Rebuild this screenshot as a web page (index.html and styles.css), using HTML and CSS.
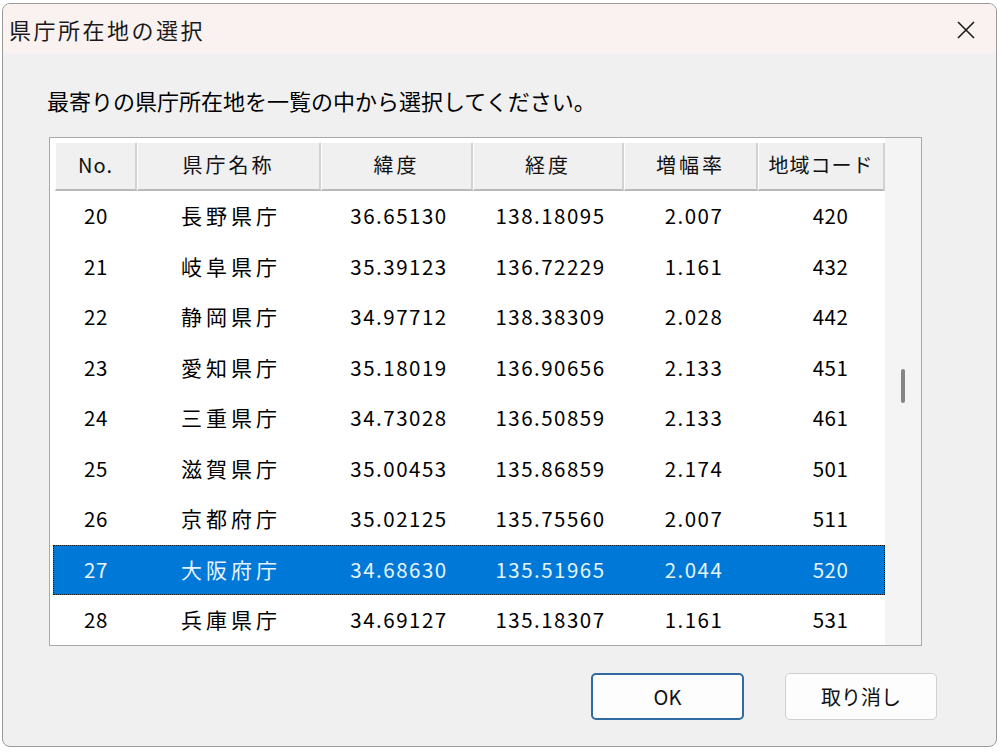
FILE: index.html
```html
<!DOCTYPE html>
<html lang="ja">
<head>
  <meta charset="UTF-8">
  <title>県庁所在地の選択</title>
  <link rel="stylesheet" href="styles.css">
</head>
<body>

  <div class="dialog">
    <div class="title-bar">
      <span class="title">県庁所在地の選択</span>
      <button class="close-btn" aria-label="閉じる">
        <svg width="20" height="20" viewBox="0 0 20 20">
          <path d="M2 2 L18 18 M18 2 L2 18" stroke="#1a1a1a" stroke-width="1.6" fill="none"/>
        </svg>
      </button>
    </div>

    <div class="dialog-body">
      <p class="prompt">最寄りの県庁所在地を一覧の中から選択してください。</p>

      <div class="list-box">
        <div class="list-main">
          <div class="list-header">
            <div class="hcell col-no">No.</div>
            <div class="hcell col-name">県庁名称</div>
            <div class="hcell col-lat">緯度</div>
            <div class="hcell col-lon">経度</div>
            <div class="hcell col-amp">増幅率</div>
            <div class="hcell col-code">地域コード</div>
          </div>
          <div class="list-rows" id="rows">
            <!-- rows are filled in by the script below -->
          </div>
        </div>
        <div class="scrollbar">
          <div class="thumb"></div>
        </div>
      </div>

      <div class="buttons">
        <button class="btn btn-default">OK</button>
        <button class="btn">取り消し</button>
      </div>
    </div>
  </div>

  <script>
    const prefs = [
      [20, '長野県庁', '36.65130', '138.18095', '2.007', 420],
      [21, '岐阜県庁', '35.39123', '136.72229', '1.161', 432],
      [22, '静岡県庁', '34.97712', '138.38309', '2.028', 442],
      [23, '愛知県庁', '35.18019', '136.90656', '2.133', 451],
      [24, '三重県庁', '34.73028', '136.50859', '2.133', 461],
      [25, '滋賀県庁', '35.00453', '135.86859', '2.174', 501],
      [26, '京都府庁', '35.02125', '135.75560', '2.007', 511],
      [27, '大阪府庁', '34.68630', '135.51965', '2.044', 520],
      [28, '兵庫県庁', '34.69127', '135.18307', '1.161', 531]
    ];
    const selected = 27;
    const cols = ['col-no', 'col-name', 'col-lat', 'col-lon', 'col-amp', 'col-code'];
    const body = document.getElementById('rows');

    prefs.forEach(function(p) {
      const row = document.createElement('div');
      row.className = 'row' + (p[0] === selected ? ' selected' : '');
      p.forEach(function(val, i) {
        const cell = document.createElement('div');
        cell.className = 'cell ' + cols[i];
        cell.textContent = val;
        row.appendChild(cell);
      });
      body.appendChild(row);
    });
  </script>

</body>
</html>
```

FILE: styles.css
```css
body {
  margin: 0;
  padding: 3px 3px 3px 2px;
  background-color: #ffffff;
  font-family: "Noto Sans CJK JP", "Noto Sans", sans-serif;
  color: #000;
}
.dialog {
  height: 744px;
  box-sizing: border-box;
  border: 1px solid #9a9a9a;
  border-radius: 8px;
  overflow: hidden;
  background-color: #f0f0f0;
  display: flex;
  flex-direction: column;
}
.title-bar {
  height: 49px;
  flex: none;
  background-color: #f9f2f0;
  display: flex;
  align-items: center;
  justify-content: space-between;
  padding: 0 20px 0 6px;
}
.title {
  font-size: 22px;
  letter-spacing: 2.5px;
  color: #1a1a1a;
}
.close-btn {
  background: none;
  border: none;
  padding: 0;
  width: 20px;
  height: 20px;
  margin-top: 2px;
}
.dialog-body {
  padding: 0 0 0 46px;
}
.prompt {
  margin: 35px 0 25px -2px;
  font-size: 22px;
  line-height: 24px;
}

/* list view */
.list-box {
  width: 873px;
  height: 509px;
  box-sizing: border-box;
  border: 1px solid #a9a9a9;
  background-color: #fff;
  display: flex;
  overflow: hidden;
}
.list-main {
  width: 832px;
  padding: 5px 0 0 3px;
}
.list-header {
  display: flex;
  height: 48px;
  padding-left: 2px;
}
.hcell {
  box-sizing: border-box;
  height: 48px;
  padding-bottom: 3px;
  background-color: #f0f0f0;
  border-left: 1px solid #ffffff;
  border-right: 2px solid #d2d2d2;
  border-bottom: 2px solid #b9b9b9;
  display: flex;
  align-items: center;
  justify-content: center;
  font-size: 20px;
  letter-spacing: 3px;
  color: #111;
}
.list-header .col-no { width: 82px; letter-spacing: 1px; }
.list-header .col-name { width: 184px; }
.list-header .col-lat { width: 152px; }
.list-header .col-lon { width: 151px; }
.list-header .col-amp { width: 134px; }
.list-header .col-code { width: 127px; letter-spacing: 1px; }

.row {
  display: flex;
  height: 50.5px;
  box-sizing: border-box;
  font-size: 20.5px;
  letter-spacing: 1.5px;
}
.cell {
  display: flex;
  align-items: center;
  justify-content: center;
  box-sizing: border-box;
  padding-bottom: 2px;
}
.row .col-no { width: 86px; letter-spacing: 0.5px; }
.row .col-name { width: 184px; letter-spacing: 4px; font-size: 21px; }
.row .col-lat { width: 152px; }
.row .col-lon { width: 151px; }
.row .col-amp { width: 134px; padding-left: 2px; }
.row .col-code { width: 125px; padding-left: 16px; letter-spacing: 0.5px; }

.row.selected {
  background-color: #0078d7;
  color: #e6f4ff;
  outline: 1px dotted #1a1a1a;
  outline-offset: -1px;
}

/* scroll bar */
.scrollbar {
  flex: 1;
  background-color: #f4f4f4;
  position: relative;
}
.thumb {
  position: absolute;
  left: 16px;
  top: 231px;
  width: 4px;
  height: 34px;
  border-radius: 2px;
  background-color: #858585;
}

.buttons {
  display: flex;
  justify-content: flex-end;
  gap: 41px;
  margin-top: 27px;
  padding-right: 59px;
}
.btn {
  width: 152px;
  height: 47px;
  box-sizing: border-box;
  border: 1px solid #d0d0d0;
  border-radius: 5px;
  background-color: #fdfdfd;
  font-family: "Noto Sans CJK JP", "Noto Sans", sans-serif;
  font-size: 20px;
  color: #111;
  padding: 0;
}
.btn-default {
  width: 153px;
  border: 2px solid #2f6aa3;
}
```
